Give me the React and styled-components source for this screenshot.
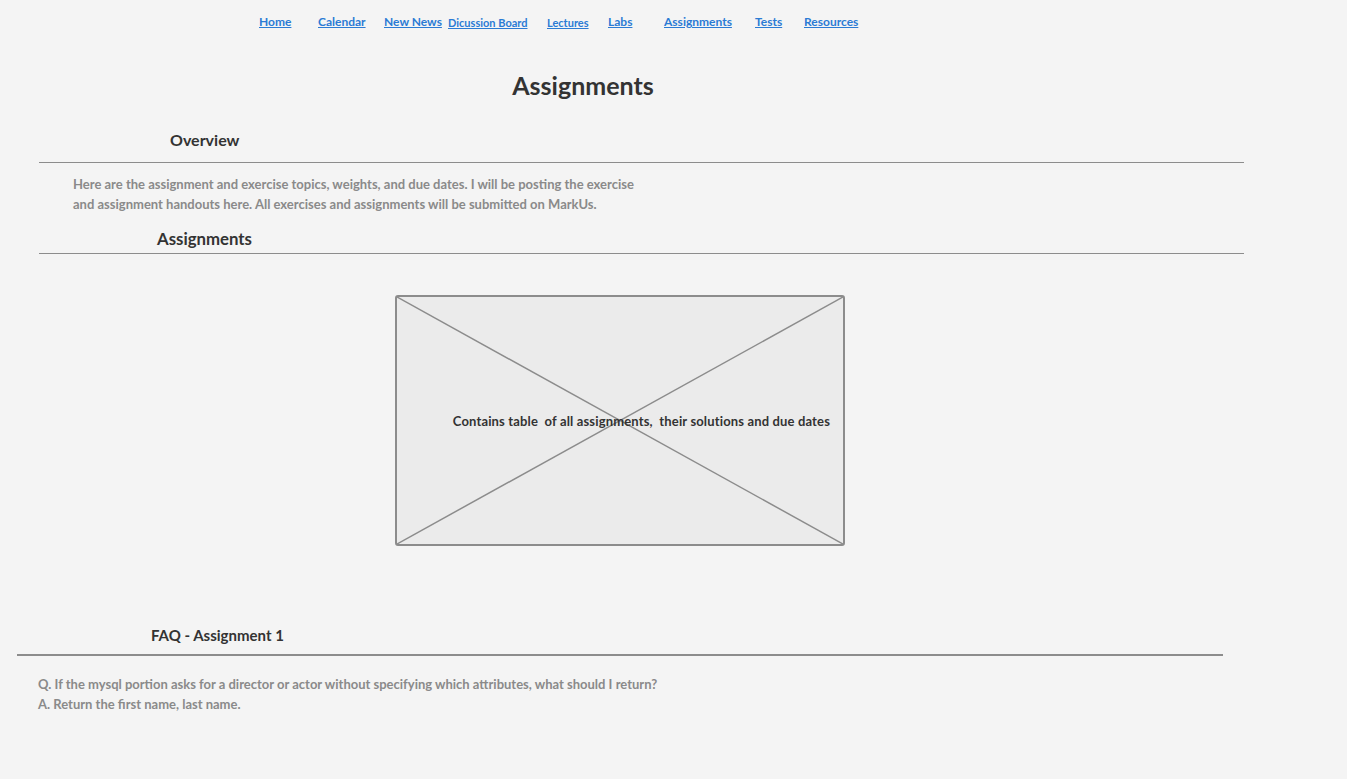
import React from 'react';
import styled, {createGlobalStyle} from "styled-components";

const GlobalStyle = createGlobalStyle`
  html, body {
    margin: 0;
    padding: 0;
    background: #f4f4f4;
  }
  body {
    font-family: Lato, "Noto Sans", sans-serif;
  }
`

const Page = styled.div`
  width: 1347px;
  min-height: 779px;
  background: #f4f4f4;
  overflow: hidden;
`

const Nav = styled.nav`
  display: flex;
  align-items: center;
  padding: 10px 0 0 259px;
  height: 20px;
`

const NavItem = styled.div`
  width: ${props => props.w ? props.w + 'px' : 'auto'};
  flex-shrink: 0;
  padding-top: ${props => props.small ? '2px' : '0'};
`

const NavLink = styled.a`
  color: #2b7bd4;
  font-weight: bold;
  font-size: ${props => props.small ? '11px' : '12px'};
  line-height: 16px;
  text-decoration: underline;
  cursor: pointer;
`

const Title = styled.h1`
  width: 1166px;
  margin: 40px 0 0;
  text-align: center;
  font-size: 25px;
  line-height: 30px;
  font-weight: bold;
  color: #333;
`

const Heading = styled.h2`
  margin: ${props => props.top}px 0 0 ${props => props.left}px;
  font-size: ${props => props.size || 16}px;
  line-height: 20px;
  font-weight: bold;
  color: #333;
`

const Rule = styled.hr`
  margin: ${props => props.top}px 0 0 ${props => props.left}px;
  width: ${props => props.w}px;
  border: none;
  height: ${props => props.thick ? 2 : 1}px;
  background: #8c8c8c;
`

const Paragraph = styled.p`
  margin: ${props => props.top}px 0 0 ${props => props.left}px;
  width: ${props => props.w ? props.w + 'px' : 'auto'};
  font-size: 13px;
  line-height: 20px;
  font-weight: bold;
  color: #8a8a8a;
`

const Placeholder = styled.div`
  position: relative;
  margin: 41px 0 0 395px;
  width: 450px;
  height: 251px;
  box-sizing: border-box;
  border: 2px solid #8c8c8c;
  border-radius: 3px;
  background: #ebebeb;
  display: flex;
  align-items: center;
  justify-content: flex-end;
  padding-right: 13px;
`

const Cross = styled.svg`
  position: absolute;
  inset: 0;
  width: 100%;
  height: 100%;
`

const PlaceholderText = styled.span`
  position: relative;
  font-size: 13px;
  font-weight: bold;
  color: #333;
  letter-spacing: 0.15px;
  white-space: pre;
`

const navItems = [
    {label: "Home", w: 59},
    {label: "Calendar", w: 66},
    {label: "New News", w: 64},
    {label: "Dicussion Board", w: 99, small: true},
    {label: "Lectures", w: 61, small: true},
    {label: "Labs", w: 56},
    {label: "Assignments", w: 91},
    {label: "Tests", w: 49},
    {label: "Resources"},
]

const App = () => {
    return (
        <Page>
            <GlobalStyle/>
            <Nav>
                {navItems.map(item => (
                    <NavItem key={item.label} w={item.w} small={item.small}>
                        <NavLink small={item.small}>{item.label}</NavLink>
                    </NavItem>
                ))}
            </Nav>
            <Title>Assignments</Title>

            <Heading top={30} left={170}>Overview</Heading>
            <Rule top={12} left={39} w={1205}/>
            <Paragraph top={11} left={73} w={572}>
                Here are the assignment and exercise topics, weights, and due dates. I will be posting the exercise
                and assignment handouts here. All exercises and assignments will be submitted on MarkUs.
            </Paragraph>

            <Heading top={15} left={157} size={16.8}>Assignments</Heading>
            <Rule top={4} left={39} w={1205}/>

            <Placeholder>
                <Cross viewBox="0 0 446 247" preserveAspectRatio="none">
                    <line x1="0" y1="0" x2="446" y2="247" stroke="#8c8c8c" strokeWidth="1.5"/>
                    <line x1="446" y1="0" x2="0" y2="247" stroke="#8c8c8c" strokeWidth="1.5"/>
                </Cross>
                <PlaceholderText>Contains table  of all assignments,  their solutions and due dates</PlaceholderText>
            </Placeholder>

            <Heading top={79} left={151} size={15}>FAQ - Assignment 1</Heading>
            <Rule top={9} left={17} w={1206} thick/>
            <Paragraph top={18} left={38}>
                Q. If the mysql portion asks for a director or actor without specifying which attributes, what should I return?
                <br/>
                A. Return the first name, last name.
            </Paragraph>
        </Page>
    );
};

export default App;
